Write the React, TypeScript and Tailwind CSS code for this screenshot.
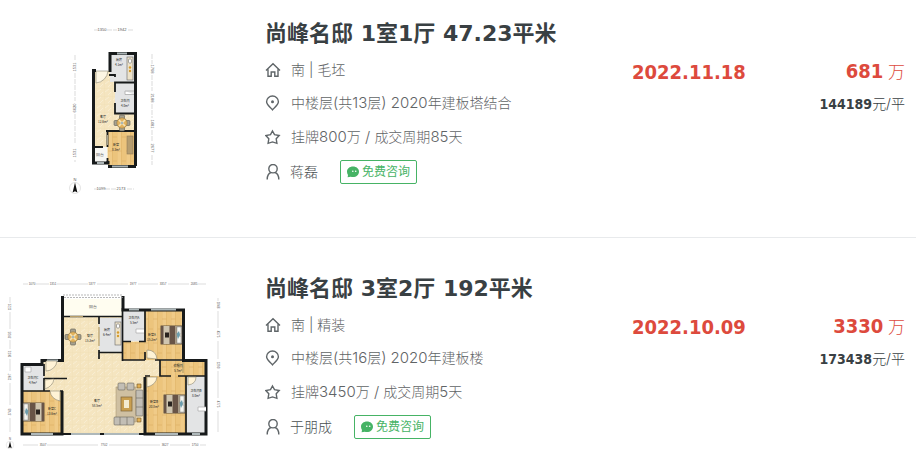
import type { ReactNode } from 'react';

const INK = '#171a1b';
const WOOD = 'url(#wood)';
const TILE = 'url(#tile)';
const GREY = '#e3e4e5';

type LabelProps = { x: number; y: number; size?: number; rotate?: number; children: ReactNode };

function Label({ x, y, size = 4, rotate = 0, children }: LabelProps) {
  return (
    <text x={x} y={y} fontSize={size} textAnchor="middle" fill="#555" transform={rotate ? `rotate(${rotate} ${x} ${y})` : undefined}>
      {children}
    </text>
  );
}

function Room({ x, y, name, area }: { x: number; y: number; name: string; area: string }) {
  return (
    <g className="font-['Noto_Sans_CJK_SC',sans-serif]">
      <text x={x} y={y - 1} fontSize="3" textAnchor="middle" fill="#222">{name}</text>
      <text x={x} y={y + 4} fontSize="3" textAnchor="middle" fill="#222">{area}</text>
    </g>
  );
}

function Defs() {
  return (
    <defs>
      <pattern id="wood" width="9" height="24" patternUnits="userSpaceOnUse">
        <rect width="9" height="24" fill="#ecc47c" />
        <rect width="4" height="24" fill="#f0cb88" />
        <path d="M0 0V24M4.500 0V24" stroke="#dfb266" strokeWidth=".5" />
        <path d="M0 7H4.500M4.500 17H9" stroke="#d8a95c" strokeWidth=".5" />
      </pattern>
      <pattern id="tile" width="8" height="8" patternUnits="userSpaceOnUse">
        <rect width="8" height="8" fill="#f5e5c0" />
        <path d="M0 0H8M0 0V8" stroke="#efdcb0" strokeWidth=".6" />
        <path d="M1 4L5 1M4 7L7 4" stroke="#f9efd6" strokeWidth=".8" />
      </pattern>
    </defs>
  );
}

function DiningSet({ x, y }: { x: number; y: number }) {
  return (
    <g transform={`translate(${x} ${y})`}>
      <g fill="#a5a08f" stroke="#5d5a50" strokeWidth=".6">
        <rect x="-2.500" y="-8" width="5" height="4" rx="1" />
        <rect x="-2.500" y="4" width="5" height="4" rx="1" />
        <rect x="-8" y="-2.500" width="4" height="5" rx="1" />
        <rect x="4" y="-2.500" width="4" height="5" rx="1" />
      </g>
      <circle r="5.200" fill="#e3b35e" stroke="#8a7344" strokeWidth=".6" />
      <path d="M-3-3L3 3M3-3L-3 3" stroke="#f5e4b8" strokeWidth="1.600" />
      <circle r="1.300" fill="#a8b7b9" />
    </g>
  );
}

function Bed({ x, y, flip = false }: { x: number; y: number; flip?: boolean }) {
  return (
    <g transform={`translate(${x} ${y})${flip ? ' scale(-1 1)' : ''}`}>
      <rect x="0" y="0" width="21" height="18" fill="#e9e3d4" stroke="#3f3730" strokeWidth=".8" />
      <rect x="0" y="0" width="14" height="18" fill="#685447" />
      <rect x="2.500" y="0" width="6" height="18" fill="#cfc5b0" />
      <rect x="4" y="6.500" width="4" height="5" fill="#29231f" />
      <rect x="14" y="0" width="2" height="18" fill="#a79a86" />
      <rect x="16" y="1" width="4" height="7" fill="#f5f4ee" stroke="#777" strokeWidth=".4" />
      <rect x="16" y="10" width="4" height="7" fill="#f5f4ee" stroke="#777" strokeWidth=".4" />
      <path d="M15.500 8L18 5L19 9L17 13Z" fill="#6c9dad" />
    </g>
  );
}

function Kitchen({ x, y, height }: { x: number; y: number; height: number }) {
  return (
    <g transform={`translate(${x} ${y})`}>
      <rect width="6" height={height} fill="#ece2cb" stroke="#666" strokeWidth=".6" />
      <rect x="1.500" y="2" width="3" height="4" rx="1" fill="#fff" stroke="#555" strokeWidth=".5" />
      <circle cx="3" cy="10.500" r="1.200" fill="#d69b2c" />
      <circle cx="3" cy="14" r="1.200" fill="#d69b2c" />
    </g>
  );
}

function NorthMark({ x, y, scale = 1 }: { x: number; y: number; scale?: number }) {
  return (
    <g transform={`translate(${x} ${y}) scale(${scale})`}>
      <circle r="5.500" fill="none" stroke="#c9c9c9" strokeWidth=".5" />
      <path d="M0-5.500L2.400 4.500L0 3.200L-2.400 4.500Z" fill="#111" />
      <Label x={0} y={-7} size={4}>N</Label>
    </g>
  );
}

function OneRoomPlan() {
  return (
    <svg viewBox="0 20 230 180" role="img" aria-label="1室1厅户型图" className="h-[180px] w-[230px] font-['Liberation_Sans',sans-serif]">
      <Defs />
      <path d="M95 71H109V53H135V166H108V164H93V71Z" fill={TILE} />
      <rect x="110" y="54" width="25" height="28" fill={GREY} />
      <rect x="115" y="83" width="20" height="30" fill={GREY} />
      <rect x="108" y="131" width="27" height="35" fill={WOOD} />
      <rect x="94" y="147" width="13" height="15" fill="#f7f7f4" />
      <path d="M96 71H108A13 13 0 0 1 96 83Z" fill="#fdf6e3" stroke="#8b8674" strokeWidth=".6" />
      <g fill="none" stroke={INK} strokeWidth="3">
        <path d="M96 70.500H93.500V148M110 72V53.500H135.500V166" />
        <path d="M93.500 146V163H108V161" />
        <path d="M108 166.500H136" />
      </g>
      <g fill="none" stroke={INK} strokeWidth="1.800">
        <path d="M109 75H115V77M115 92V82.500H134M115 103V113.500H134" />
        <path d="M106 131H134M107.500 131V147M94 147H103M107.500 158V163" />
      </g>
      <path d="M117 53.500H127M112 166.500H128M97 163H104" stroke="#aab3b5" strokeWidth="2.200" />
      <path d="M107.500 135V145" stroke="#a7a492" strokeWidth="1.200" />
      <Kitchen x={127} y={57} height={23} />
      <path d="M125 91H134M125 91V94.500H134" fill="#fff" stroke="#aaa" strokeWidth=".8" />
      <DiningSet x={122} y={123} />
      <rect x="127" y="136" width="6" height="18" fill="#b59d70" stroke="#917b54" strokeWidth=".6" />
      <Room x={119} y={62} name="厨房" area="4.1m²" />
      <Room x={125} y={103} name="卫生间" area="4.0m²" />
      <Room x={103} y={119} name="客厅" area="12.6m²" />
      <Room x={116} y={147} name="卧室" area="8.3m²" />
      <Label x={100} y={156}>阳台</Label>
      <g stroke="#b7b7b7" strokeWidth=".5" strokeDasharray="5 1">
        <path d="M94 30H98M107 30H117M128 30H134M94 189H97M105 189H116M127 189H134" />
        <path d="M75 55V60M75 73V101M75 114V143M75 160V162M152 54V64M152 75V91M152 104V118M152 130V141M152 155V165" />
      </g>
      <Label x={102} y={31}>1350</Label>
      <Label x={122} y={31}>1942</Label>
      <Label x={101} y={190}>1099</Label>
      <Label x={121} y={190}>2173</Label>
      <Label x={76} y={67} rotate={-90}>1531</Label>
      <Label x={76} y={108} rotate={-90}>6620</Label>
      <Label x={76} y={153} rotate={-90}>1531</Label>
      <Label x={151} y={69} rotate={90}>1768</Label>
      <Label x={151} y={98} rotate={90}>2188</Label>
      <Label x={151} y={124} rotate={90}>1481</Label>
      <Label x={151} y={148} rotate={90}>2677</Label>
      <NorthMark x={75} y={188} />
    </svg>
  );
}

function ThreeRoomPlan() {
  return (
    <svg viewBox="0 275 230 180" role="img" aria-label="3室2厅户型图" className="h-[180px] w-[230px] font-['Liberation_Sans',sans-serif]">
      <path d="M63 316H122V309H182V360H206V434H22V364H42V360H63Z" fill={TILE} />
      <rect x="64" y="299" width="58" height="17" fill="#fffdf0" />
      <rect x="99" y="318" width="23" height="34" fill={GREY} />
      <rect x="123" y="310" width="21" height="31" fill={GREY} />
      <rect x="145" y="310" width="37" height="50" fill={WOOD} />
      <rect x="123" y="342" width="24" height="18" fill={WOOD} />
      <rect x="160" y="361" width="45" height="15" fill={WOOD} />
      <rect x="145" y="376" width="41" height="57" fill={WOOD} />
      <rect x="187" y="376" width="19" height="57" fill={GREY} />
      <rect x="23" y="366" width="21" height="24" fill={GREY} />
      <rect x="23" y="391" width="40" height="42" fill={WOOD} />
      <g fill="none" stroke={INK} strokeWidth="3">
        <path d="M62.500 296V360.500H42V364.500H22V434H62V391" />
        <path d="M123 296V310H183.500V360.500H206V434H145V377" />
      </g>
      <path d="M62 434H145" stroke={INK} strokeWidth="2" />
      <path d="M63 295H123M64 297.500H123" stroke="#999" strokeWidth=".7" strokeDasharray="2 1" />
      <g fill="none" stroke={INK} strokeWidth="1.700">
        <path d="M63 316.500H122M99 317V324M99 350V359M99 352.500H122M122.500 308V361" />
        <path d="M122 341.500H131M139 341.500H145V310M145 352V360M122 360H145M155 360H184" />
        <path d="M44 364V376M44 378.500H67M44 378V391M22 391H50M60 391H63" />
        <path d="M160 360V376H171M178 376H206M145 376H150M186 376V434" />
      </g>
      <g stroke="#aeb8ba" strokeWidth="2">
        <path d="M129 309.500H139M151 309.500H176M47 360.500H58M31 434H53M71 434H100M104 434H139M155 434H178M192 434H200" />
      </g>
      <path d="M70 316.500H83M99 327V346M183 362V373" stroke="#b79e68" strokeWidth="1.200" />
      <g fill="#fff3d6" stroke="#8b8674" strokeWidth=".6">
        <path d="M46 361V371A11 11 0 0 0 57 361Z" />
        <path d="M45 380V389Q53 386 54 379Z" />
        <path d="M60 391V401Q51 399 50 391Z" />
        <path d="M147 358V350Q156 350 157 359Z" />
        <path d="M147 377V387Q156 385 157 377Z" />
        <path d="M188 377V385Q196 384 196 377Z" />
      </g>
      <Kitchen x={115} y={322} height={23} />
      <DiningSet x={73} y={337} />
      <Bed x={161} y={326} />
      <Bed x={164} y={395} />
      <Bed x={44} y={403} flip />
      <path d="M144 329H136V333H144M206 407H198V411H206M25 367H31V372H25Z" fill="#fff" stroke="#aaa" strokeWidth=".7" />
      <rect x="116" y="387" width="20" height="35" fill="#cfc0a2" stroke="#a28f6a" strokeWidth=".5" />
      <g fill="#c2beb5" stroke="#69645b" strokeWidth=".6">
        <rect x="118" y="383" width="7" height="7" rx="1" />
        <rect x="127" y="383" width="7" height="7" rx="1" />
        <rect x="136" y="390" width="7" height="26" rx="1" />
        <rect x="114" y="417" width="20" height="8" rx="1" />
        <path d="M136 398H143M136 407H143M120 417V425M127 417V425" />
      </g>
      <rect x="121" y="397" width="11" height="14" fill="#c99f50" stroke="#7c6439" strokeWidth=".7" />
      <rect x="124" y="400" width="5" height="8" fill="#f4ebcf" />
      <path d="M137 384H141V388H137ZM137 418H141V422H137Z" fill="#e3b154" stroke="#6c5328" strokeWidth=".6" />
      <Label x={93} y={308}>阳台</Label>
      <Room x={90} y={338} name="餐厅" area="15.3m²" />
      <Room x={107} y={332} name="厨房" area="6.4m²" />
      <Room x={134} y={320} name="卫生间A" area="5.5m²" />
      <Room x={152} y={337} name="卧室A" area="15.2m²" />
      <Room x={178} y={368} name="衣帽间" area="5.7m²" />
      <Room x={33} y={380} name="卫生间C" area="4.9m²" />
      <Room x={52} y={411} name="卧室C" area="13.6m²" />
      <Room x={97} y={403} name="客厅" area="58.5m²" />
      <Room x={154} y={404} name="卧室B" area="20.8m²" />
      <Room x={196} y={393} name="卫生间B" area="8.0m²" />
      <g stroke="#b9b9b9" strokeWidth=".5">
        <path d="M23 284H28M36 284H49M57 284H88M97 284H128M138 284H158M168 284H189M198 284H206" />
        <path d="M23 445H38M47 445H98M109 445H160M170 445H190M200 445H206" />
        <path d="M10 297V303M10 312V329M10 340V349M10 359V371M10 383V405M10 418V432" />
        <path d="M218 298V301M218 311V328M218 341V359M218 371V398M218 411V432" />
      </g>
      <Label x={32} y={285} size={3}>1070</Label>
      <Label x={53} y={285} size={3}>1351</Label>
      <Label x={92} y={285} size={3}>5377</Label>
      <Label x={133} y={285} size={3}>1977</Label>
      <Label x={163} y={285} size={3}>3357</Label>
      <Label x={194} y={285} size={3}>2085</Label>
      <Label x={43} y={446} size={3}>3507</Label>
      <Label x={104} y={446} size={3}>7702</Label>
      <Label x={165} y={446} size={3}>3627</Label>
      <Label x={195} y={446} size={3}>1750</Label>
      <Label x={11} y={307} size={3} rotate={-90}>1521</Label>
      <Label x={11} y={335} size={3} rotate={-90}>3935</Label>
      <Label x={11} y={354} size={3} rotate={-90}>1051</Label>
      <Label x={11} y={377} size={3} rotate={-90}>2207</Label>
      <Label x={11} y={412} size={3} rotate={-90}>3743</Label>
      <Label x={217} y={305} size={3} rotate={90}>1046</Label>
      <Label x={217} y={334} size={3} rotate={90}>4575</Label>
      <Label x={217} y={365} size={3} rotate={90}>1293</Label>
      <Label x={217} y={404} size={3} rotate={90}>4775</Label>
      <NorthMark x={10} y={445} scale={0.7} />
    </svg>
  );
}

function Icon({ children }: { children: ReactNode }) {
  return (
    <svg viewBox="0 0 16 16" aria-hidden="true" className="size-4 shrink-0" fill="none" stroke="#5f6568" strokeWidth="1.400">
      {children}
    </svg>
  );
}

function HomeIcon() {
  return (
    <Icon>
      <path d="M1 8.500L8 1.700L15 8.500M3 7.300V14.300H6.200V10H9.800V14.300H13V7.300" />
    </Icon>
  );
}

function PinIcon() {
  return (
    <Icon>
      <path d="M7.500 14.800C5.500 12.200 1.600 9.800 1.600 6.700A5.900 5.700 0 0 1 13.400 6.700C13.400 9.800 9.500 12.200 7.500 14.800Z" />
      <circle cx="7.500" cy="6.700" r="1.500" fill="#5f6568" stroke="none" />
    </Icon>
  );
}

function StarIcon() {
  return (
    <Icon>
      <path d="M7.500 2L9.500 5.700L14.200 6.500L11.200 9.800L11.900 14.300L7.500 12.900L3.100 14.300L3.800 9.800L.8 6.500L5.500 5.700Z" />
    </Icon>
  );
}

function PersonIcon() {
  return (
    <Icon>
      <circle cx="8" cy="4.700" r="4.200" />
      <path d="M2.200 15.500C2.200 12 3.700 9.300 6 8.500M10 8.500C12.300 9.300 13.800 12 13.800 15.500" />
    </Icon>
  );
}

function ChatIcon() {
  return (
    <svg viewBox="0 0 12 12" aria-hidden="true" className="size-3 shrink-0">
      <path d="M6 .5C9.400 .5 12 2.700 12 5.700S9.400 11 6 11C5.200 11 4.500 10.900 3.800 10.700L.6 11.300L1 8.900C.4 8 0 6.900 0 5.700C0 2.700 2.600 .5 6 .5Z" fill="#46b365" />
      <circle cx="5.800" cy="5.300" r=".8" fill="#fff" />
      <circle cx="8.700" cy="5.300" r=".8" fill="#fff" />
    </svg>
  );
}

/* Sets the digits and signs between Chinese characters a size larger. */
function Mixed({ text }: { text: string }) {
  return (
    <span>
      {text.split(/([ -~]+)/).map((part, i) => (i % 2 ? <span key={i} className="text-[15px] leading-none">{part}</span> : part))}
    </span>
  );
}

type Deal = {
  title: string;
  facing: string;
  floor: string;
  listing: string;
  agent: string;
  date: string;
  total: string;
  unit: string;
  plan: ReactNode;
};

const deals: Deal[] = [
  {
    title: '尚峰名邸 1室1厅 47.23平米',
    facing: '南 | 毛坯',
    floor: '中楼层(共13层) 2020年建板塔结合',
    listing: '挂牌800万 / 成交周期85天',
    agent: '蒋磊',
    date: '2022.11.18',
    total: '681',
    unit: '144189',
    plan: <OneRoomPlan />,
  },
  {
    title: '尚峰名邸 3室2厅 192平米',
    facing: '南 | 精装',
    floor: '中楼层(共16层) 2020年建板楼',
    listing: '挂牌3450万 / 成交周期5天',
    agent: '于朋成',
    date: '2022.10.09',
    total: '3330',
    unit: '173438',
    plan: <ThreeRoomPlan />,
  },
];

function DealRow({ deal }: { deal: Deal }) {
  return (
    <li className="flex items-start border-b border-[#e8eaec] pt-[37px] pr-[11px] pb-[37px] first:pt-5 last:border-b-0 last:pb-0">
      <a href="#plan" className="shrink-0">{deal.plan}</a>
      <div className="ml-[35px] min-w-0 flex-1">
        <h2 className="h-7 font-['DejaVu_Sans','Noto_Sans_CJK_SC',sans-serif] text-[22px] leading-7 font-semibold whitespace-nowrap text-[#394043]">
          <a href="#deal">{deal.title}</a>
        </h2>
        <div className="mt-3 flex flex-col gap-[13px] text-sm leading-5 font-light whitespace-nowrap text-[#5f6466]">
          <p className="flex h-5 items-center gap-[10px]"><HomeIcon />{deal.facing}</p>
          <p className="flex h-5 items-center gap-[10px]"><PinIcon /><Mixed text={deal.floor} /></p>
          <p className="mt-px flex h-5 items-center gap-[10px]"><StarIcon /><Mixed text={deal.listing} /></p>
          <div className="flex items-center">
            <PersonIcon />
            <span className="ml-[9px] text-[#494e50]">{deal.agent}</span>
            <button type="button" className="ml-[22px] flex h-6 items-center gap-[3px] rounded-xs border border-[#46b365] px-[6px] text-xs font-normal text-[#46b365]">
              <ChatIcon />免费咨询
            </button>
          </div>
        </div>
      </div>
      <p className="w-[113px] shrink-0 pt-[39px] font-['DejaVu_Sans_Condensed','DejaVu_Sans',sans-serif] text-xl leading-[26px] font-bold text-[#dd4a3d]">{deal.date}</p>
      <div className="w-[160px] shrink-0 pt-[39px] text-right whitespace-nowrap">
        <p className="text-[17px] leading-[26px] font-light text-[#dd4a3d]">
          <span className="font-['DejaVu_Sans_Condensed','DejaVu_Sans',sans-serif] text-xl leading-none font-bold">{deal.total}</span> 万
        </p>
        <p className="mt-[9px] text-sm leading-5 font-light text-[#394043]">
          <span className="font-['DejaVu_Sans_Condensed','DejaVu_Sans',sans-serif] font-bold">{deal.unit}</span>元/平
        </p>
      </div>
    </li>
  );
}

export default function App() {
  return (
    <main className="bg-white font-['Inter','Noto_Sans_CJK_SC',sans-serif]">
      <ul>
        {deals.map((deal) => (
          <DealRow key={deal.title} deal={deal} />
        ))}
      </ul>
    </main>
  );
}
